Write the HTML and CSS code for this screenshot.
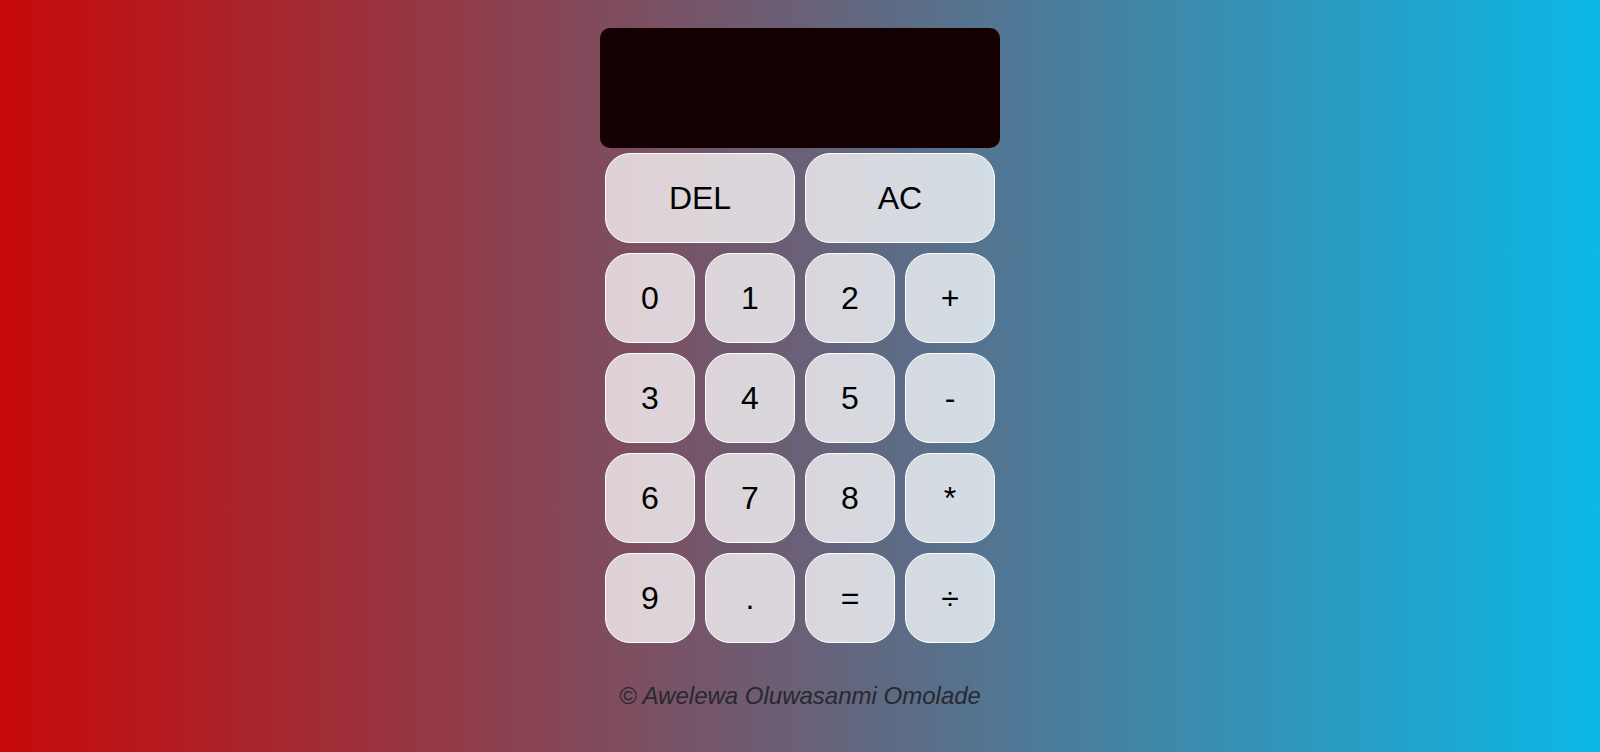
FILE: index.html
```html
<!DOCTYPE html>
<html lang="en">
<head>
<meta charset="UTF-8">
<title>Calculator</title>
<link rel="stylesheet" href="styles.css">
</head>
<body>
  <main class="calculator">
    <div class="display"></div>
    <div class="keys">
      <button class="key wide">DEL</button>
      <button class="key wide">AC</button>
      <button class="key">0</button>
      <button class="key">1</button>
      <button class="key">2</button>
      <button class="key">+</button>
      <button class="key">3</button>
      <button class="key">4</button>
      <button class="key">5</button>
      <button class="key">-</button>
      <button class="key">6</button>
      <button class="key">7</button>
      <button class="key">8</button>
      <button class="key">*</button>
      <button class="key">9</button>
      <button class="key">.</button>
      <button class="key">=</button>
      <button class="key">÷</button>
    </div>
  </main>
  <footer class="credit">© Awelewa Oluwasanmi Omolade</footer>
</body>
</html>
```
FILE: styles.css
```css
* { box-sizing: border-box; }

html, body { height: 100%; }

body {
  margin: 0;
  min-height: 100vh;
  background: linear-gradient(to right, #c70909, #0bb8e6);
  font-family: "Liberation Sans", Arial, sans-serif;
  display: flex;
  flex-direction: column;
  align-items: center;
}

.calculator {
  width: 400px;
  margin-top: 28px;
}

.display {
  height: 120px;
  background: #150101;
  border-radius: 10px;
}

.keys {
  display: grid;
  grid-template-columns: repeat(4, 90px);
  grid-auto-rows: 90px;
  gap: 10px;
  padding: 5px;
}

.key {
  border: 1px solid #ffffff;
  border-radius: 25px;
  background: rgba(255, 255, 255, 0.75);
  color: #000;
  font-family: "Liberation Sans", Arial, sans-serif;
  font-size: 32px;
  padding: 0;
  cursor: pointer;
}

.key.wide { grid-column: span 2; }

.credit {
  margin-top: 34px;
  font-size: 24px;
  font-style: italic;
  color: #28282f;
}
```
